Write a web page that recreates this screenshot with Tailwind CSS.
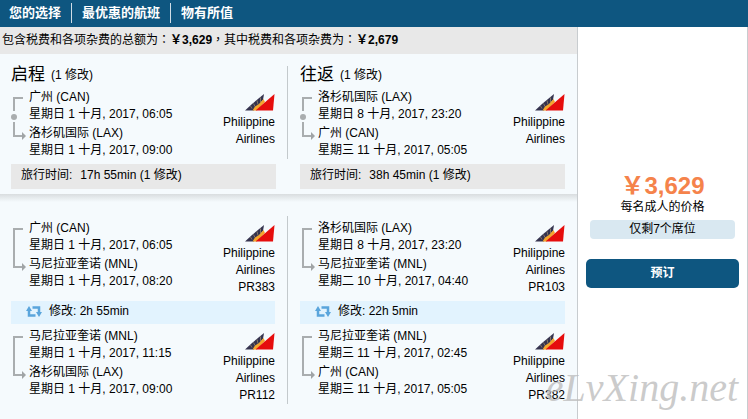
<!DOCTYPE html>
<html lang="zh-CN">
<head>
<meta charset="utf-8">
<meta name="viewport" content="width=device-width, initial-scale=1">
<title>您的选择</title>
<script src="https://cdn.jsdelivr.net/npm/@tailwindcss/browser@4"></script>
</head>
<body class="relative flex min-h-screen flex-col overflow-x-hidden bg-white font-['Liberation_Sans','Noto_Sans_CJK_SC',sans-serif] text-[12px] leading-[17px] text-black">

<svg class="hidden" aria-hidden="true">
  <symbol id="logo" viewBox="0 0 30 17">
    <path d="M0 16.5 7 10 19 0 18 6 13 12 9 16.5Z" fill="#35334f"/>
    <path d="M7.500 16.500 10 12.500 14 10 18.500 5 20 8 12 16.500Z" fill="#f5a52c"/>
    <path d="M7 14.500 5.500 12M10 12.500 8.500 9.500M13 10.500 12 6.500M15.500 8 15.500 3.500" stroke="#b9a274" stroke-width=".6" fill="none"/>
    <path d="M29.500 0 28 16.500H10.500Z" fill="#e60d0d"/>
  </symbol>
  <symbol id="route" viewBox="0 0 18 54">
    <path d="M12 9H3V47H12" fill="none" stroke="#a9adaf" stroke-width="2"/>
    <path d="M11 43 15 47 11 51Z" fill="#a0a4a6"/>
  </symbol>
  <symbol id="route-stop" viewBox="0 0 18 54">
    <path d="M12 9H3V22M3 33V47H12" fill="none" stroke="#a9adaf" stroke-width="2"/>
    <circle cx="3" cy="28" r="3" fill="#a9adaf"/>
    <path d="M11 43 15 47 11 51Z" fill="#a0a4a6"/>
  </symbol>
  <symbol id="swap" viewBox="0 0 16 11">
    <path d="M3 4V9.500H9.500M6.500 1.500H13V7" fill="none" stroke="#5aa5dc" stroke-width="2.500"/>
    <path d="M0 5 3 0 6 5ZM10 6H16L13 11Z" fill="#5aa5dc"/>
  </symbol>
</svg>

<header class="bg-[#0e5680] px-[9px] pt-[3px] pb-1">
  <nav class="flex gap-[10px] text-[13px] leading-5 font-bold text-white">
    <a href="#choice">您的选择</a>
    <a href="#best" class="border-l border-white/80 pl-[10px]">最优惠的航班</a>
    <a href="#value" class="border-l border-white/80 pl-[10px]">物有所值</a>
  </nav>
</header>

<div class="flex grow">
  <main class="grow bg-[#f5fafd]">
    <p class="bg-[#e8e8e8] px-[2px] pt-[3px] pb-[5px] leading-[18px]">包含税费和各项杂费的总额为<span lang="zh-TW" class="font-['Noto_Sans_CJK_TC']">：</span><b>￥3,629</b><span lang="zh-TW" class="font-['Noto_Sans_CJK_TC']">，</span>其中税费和各项杂费为<span lang="zh-TW" class="font-['Noto_Sans_CJK_TC']">：</span><b>￥2,679</b></p>

    <section class="pt-3 pb-[5px] pr-3 pl-[11px]">
      <div class="grid grid-cols-2">
        <div class="border-r border-[#c3c9cc] pr-3">
          <h2 class="flex items-center gap-[6px] text-[17px] leading-[18px]">启程 <small class="text-[12px]">(1 修改)</small></h2>
          <div class="mt-[5px] flex">
            <svg class="h-[54px] w-[18px] shrink-0"><use href="#route-stop"/></svg>
            <div class="flex grow flex-col gap-[2px]">
              <p>广州 (CAN)<br>星期日 1 十月, 2017, 06:05</p>
              <p>洛杉矶国际 (LAX)<br>星期日 1 十月, 2017, 09:00</p>
            </div>
            <div class="flex flex-col items-end gap-[3px] pt-[5px] text-right">
              <svg class="h-[17px] w-[30px]"><use href="#logo"/></svg>
              <p>Philippine<br>Airlines</p>
            </div>
          </div>
        </div>
        <div class="pl-3">
          <h2 class="flex items-center gap-[6px] text-[17px] leading-[18px]">往返 <small class="text-[12px]">(1 修改)</small></h2>
          <div class="mt-[5px] flex">
            <svg class="h-[54px] w-[18px] shrink-0"><use href="#route-stop"/></svg>
            <div class="flex grow flex-col gap-[2px]">
              <p>洛杉矶国际 (LAX)<br>星期日 8 十月, 2017, 23:20</p>
              <p>广州 (CAN)<br>星期三 11 十月, 2017, 05:05</p>
            </div>
            <div class="flex flex-col items-end gap-[3px] pt-[5px] text-right">
              <svg class="h-[17px] w-[30px]"><use href="#logo"/></svg>
              <p>Philippine<br>Airlines</p>
            </div>
          </div>
        </div>
      </div>
      <div class="mt-[5px] grid grid-cols-2 gap-6">
        <p class="flex gap-2 bg-[#e8e8e8] px-[10px] pt-[3px] pb-[5px]"><span>旅行时间:</span>17h 55min (1 修改)</p>
        <p class="flex gap-2 bg-[#e8e8e8] px-[10px] pt-[3px] pb-[5px]"><span>旅行时间:</span>38h 45min (1 修改)</p>
      </div>
    </section>

    <div class="h-2 bg-linear-to-b from-[#d9dddf] to-[#f5fafd]"></div>

    <section class="grid grid-cols-2 pt-[14px] pr-3 pb-4 pl-[11px]">
      <div class="border-r border-[#c3c9cc] pt-1 pr-3">
        <div class="flex">
          <svg class="h-[54px] w-[18px] shrink-0"><use href="#route"/></svg>
          <div class="flex grow flex-col gap-[2px]">
            <p>广州 (CAN)<br>星期日 1 十月, 2017, 06:05</p>
            <p>马尼拉亚奎诺 (MNL)<br>星期日 1 十月, 2017, 08:20</p>
          </div>
          <div class="flex flex-col items-end gap-[3px] pt-[5px] text-right">
            <svg class="h-[17px] w-[30px]"><use href="#logo"/></svg>
            <p>Philippine<br>Airlines<br>PR383</p>
          </div>
        </div>
        <p class="mt-[5px] mb-1 flex items-center gap-[7px] bg-[#e2f3fe] px-[15px] pt-[2px] pb-1"><svg class="h-[11px] w-4"><use href="#swap"/></svg>修改: 2h 55min</p>
        <div class="flex">
          <svg class="h-[54px] w-[18px] shrink-0"><use href="#route"/></svg>
          <div class="flex grow flex-col gap-[2px]">
            <p>马尼拉亚奎诺 (MNL)<br>星期日 1 十月, 2017, 11:15</p>
            <p>洛杉矶国际 (LAX)<br>星期日 1 十月, 2017, 09:00</p>
          </div>
          <div class="flex flex-col items-end gap-[3px] pt-[5px] text-right">
            <svg class="h-[17px] w-[30px]"><use href="#logo"/></svg>
            <p>Philippine<br>Airlines<br>PR112</p>
          </div>
        </div>
      </div>
      <div class="pt-1 pl-3">
        <div class="flex">
          <svg class="h-[54px] w-[18px] shrink-0"><use href="#route"/></svg>
          <div class="flex grow flex-col gap-[2px]">
            <p>洛杉矶国际 (LAX)<br>星期日 8 十月, 2017, 23:20</p>
            <p>马尼拉亚奎诺 (MNL)<br>星期二 10 十月, 2017, 04:40</p>
          </div>
          <div class="flex flex-col items-end gap-[3px] pt-[5px] text-right">
            <svg class="h-[17px] w-[30px]"><use href="#logo"/></svg>
            <p>Philippine<br>Airlines<br>PR103</p>
          </div>
        </div>
        <p class="mt-[5px] mb-1 flex items-center gap-[7px] bg-[#e2f3fe] px-[15px] pt-[2px] pb-1"><svg class="h-[11px] w-4"><use href="#swap"/></svg>修改: 22h 5min</p>
        <div class="flex">
          <svg class="h-[54px] w-[18px] shrink-0"><use href="#route"/></svg>
          <div class="flex grow flex-col gap-[2px]">
            <p>马尼拉亚奎诺 (MNL)<br>星期三 11 十月, 2017, 02:45</p>
            <p>广州 (CAN)<br>星期三 11 十月, 2017, 05:05</p>
          </div>
          <div class="flex flex-col items-end gap-[3px] pt-[5px] text-right">
            <svg class="h-[17px] w-[30px]"><use href="#logo"/></svg>
            <p>Philippine<br>Airlines<br>PR382</p>
          </div>
        </div>
      </div>
    </section>
  </main>

  <aside class="flex w-[171px] shrink-0 flex-col border-x border-[#c8cccf] px-2 pt-[145px] text-center">
    <p class="text-[24px] leading-7 font-bold text-[#f5834b]">￥3,629</p>
    <p class="leading-[15px]">每名成人的价格</p>
    <p class="mx-1 mt-[5px] rounded bg-[#d9e8f1] leading-[19px]">仅剩7个席位</p>
    <button type="button" class="mt-5 rounded-[5px] bg-[#0e5680] py-[6px] text-[12px] leading-[17px] font-bold text-white">预订</button>
  </aside>
</div>

<p class="pointer-events-none absolute right-[10px] bottom-3 font-['Liberation_Serif',serif] text-[40px] leading-10 text-[#bdbdbd]/80 italic">eLvXing.net</p>
</body>
</html>
